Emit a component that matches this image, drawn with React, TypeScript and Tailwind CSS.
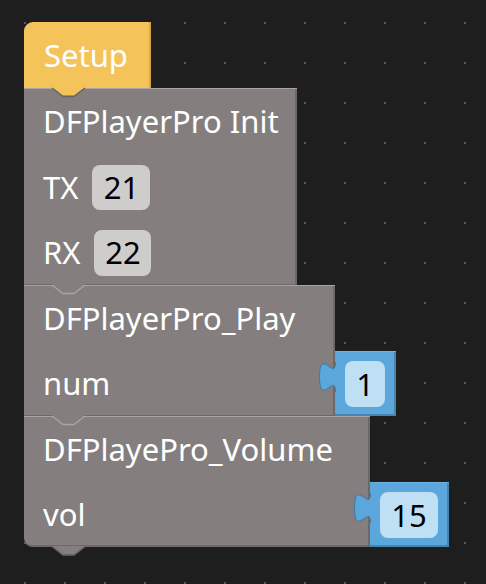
const GRAY = "#847f7e";

function Tab({ fill, edge, bottom }: { fill: string; edge: string; bottom?: boolean }) {
  // connector tab hanging under a block, filling the notch of the next one
  return (
    <svg
      className="absolute left-[28px] top-full z-10 -mt-px"
      width="36"
      height="11"
      viewBox="0 0 36 11"
    >
      <path d="M0 0 L11 8.5 H22 L33 0 Z" fill={fill} />
      <polyline
        points={bottom ? "0,0.5 11,9 22,9 33,0.5" : "0,1 11,9.5 22,9.5 33,1"}
        fill="none"
        stroke={edge}
        strokeWidth="1.3"
      />
    </svg>
  );
}

function Field({ children, className }: { children: React.ReactNode; className: string }) {
  return (
    <div className={`flex items-center justify-center rounded-[8px] text-black ${className}`}>
      {children}
    </div>
  );
}

function ValueBlock({ value, width, fieldWidth }: { value: string; width: string; fieldWidth: string }) {
  return (
    <div
      className={`relative flex h-[65px] items-center border-t border-[#6fb2e2] bg-[#5ba6db] pl-[10px] shadow-[inset_-2px_-2px_0_#4684b2] ${width}`}
    >
      <svg className="absolute -left-[16px] top-[10px]" width="18" height="32" viewBox="0 0 18 32">
        <path d="M17 0 H16.5 c0,20 -16,-16 -16,15 s16,-5 16,15 H17 Z" fill="#5ba6db" />
        <path d="M16.5 0 c0,20 -16,-16 -16,15 s16,-5 16,15" fill="none" stroke="#41789f" strokeWidth="1" />
      </svg>
      <Field className={`h-[46px] bg-[#bfe0f4] ${fieldWidth}`}>{value}</Field>
    </div>
  );
}

export default function App() {
  return (
    <div className="h-[584px] w-[486px] overflow-hidden bg-[#5a5a5a] bg-[image:linear-gradient(to_right,transparent_2px,#1e1e1e_2px),linear-gradient(to_bottom,transparent_2px,#1e1e1e_2px)] bg-[length:40px_40px] bg-[position:24px_22px] font-['Noto_Sans',sans-serif] text-[31px] leading-none text-white">
      <div className="flex flex-col items-start pl-[24px] pt-[22px]">
        {/* Setup hat */}
        <div className="relative flex h-[66px] w-[127px] items-center rounded-tl-[9px] bg-[#f4c45b] pl-[20px] shadow-[inset_-2px_0_0_#d3a84c]">
          Setup
          <Tab fill="#f4c45b" edge="#6b6665" />
        </div>

        {/* DFPlayerPro Init */}
        <div className="relative w-[273px] border-t border-[#a8a3a2] bg-[#847f7e] shadow-[inset_-2px_-1px_0_#6d6968]">
          <div className="flex h-[65px] items-center pl-[19px]">DFPlayerPro Init</div>
          <div className="flex h-[66px] items-center gap-[14px] pl-[19px]">
            TX
            <Field className="h-[45px] w-[58px] bg-[#cfcccc]">21</Field>
          </div>
          <div className="flex h-[65px] items-center gap-[14px] pl-[19px]">
            RX
            <Field className="h-[46px] w-[57px] bg-[#cfcccc]">22</Field>
          </div>
          <Tab fill={GRAY} edge="#aaa5a4" />
        </div>

        {/* DFPlayerPro_Play */}
        <div className="relative flex flex-col">
          <div className="flex h-[66px] w-[311px] items-center border-t border-[#a8a3a2] bg-[#847f7e] pl-[19px] shadow-[inset_-2px_0_0_#6d6968]">
            DFPlayerPro_Play
          </div>
          <div className="flex">
            <div className="flex h-[65px] w-[311px] items-center bg-[#847f7e] pl-[19px] shadow-[inset_-2px_-1px_0_#6d6968]">
              num
            </div>
            <ValueBlock value="1" width="w-[61px]" fieldWidth="w-[40px]" />
          </div>
          <Tab fill={GRAY} edge="#aaa5a4" />
        </div>

        {/* DFPlayePro_Volume */}
        <div className="relative flex flex-col">
          <div className="flex h-[66px] w-[346px] items-center border-t border-[#a8a3a2] bg-[#847f7e] pl-[19px] shadow-[inset_-2px_0_0_#6d6968]">
            DFPlayePro_Volume
          </div>
          <div className="flex">
            <div className="flex h-[65px] w-[346px] items-center rounded-bl-[9px] bg-[#847f7e] pl-[19px] shadow-[inset_-2px_-2px_0_#6d6968]">
              vol
            </div>
            <ValueBlock value="15" width="w-[79px]" fieldWidth="w-[58px]" />
          </div>
          <Tab fill={GRAY} edge="#6d6968" bottom />
        </div>
      </div>
    </div>
  );
}
